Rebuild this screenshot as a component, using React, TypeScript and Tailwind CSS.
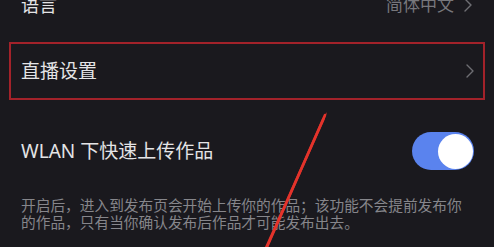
export default function App() {
  return (
    <main
      className="relative h-[247px] w-[494px] overflow-hidden bg-[#1a191e] text-[#e4e4e6]"
      style={{ fontFamily: '"Noto Sans", "Noto Sans CJK SC", sans-serif' }}
    >
      {/* 语言 row, cut at top */}
      <div className="mt-[-18px] flex h-[46px] items-center justify-between pl-[21px] pr-[22px]">
        <span className="text-[18px]">语言</span>
        <div className="flex items-center gap-[10px] text-[#77777c]">
          <span className="text-[17px]">简体中文</span>
          <Chevron />
        </div>
      </div>

      {/* 直播设置, boxed */}
      <div className="mx-[9px] mt-[14px] flex h-[58px] items-center justify-between border-2 border-[#a3222a] pl-[10px] pr-[9px]">
        <span className="text-[19px]">直播设置</span>
        <Chevron />
      </div>

      {/* WLAN toggle */}
      <div className="mt-[32px] flex items-center justify-between pl-[21px] pr-[20px]">
        <span className="text-[19px]">WLAN 下快速上传作品</span>
        <div className="flex h-[38px] w-[62px] items-center justify-end rounded-full bg-[#5a83ee] pr-[1px]">
          <div className="h-[35px] w-[35px] rounded-full bg-white" />
        </div>
      </div>

      <p className="mt-[27px] pl-[21px] text-[14.7px] leading-[16.5px] text-[#86868b]">
        开启后，进入到发布页会开始上传你的作品；该功能不会提前发布你
        <br />
        的作品，只有当你确认发布后作品才可能发布出去。
      </p>

      {/* annotation arrow */}
      <svg className="pointer-events-none absolute left-0 top-0" width="494" height="247" viewBox="0 0 494 247">
        <path d="M327 112 L324.5 120 L268 247 L265 247 L322 119 Z" fill="#e3332b" />
        <line x1="325" y1="115" x2="267" y2="247" stroke="#e3332b" strokeWidth="2.6" strokeLinecap="round" />
      </svg>
    </main>
  );
}

function Chevron() {
  return (
    <svg width="8" height="14" viewBox="0 0 8 14" fill="none">
      <path d="M1 1 L7 7 L1 13" stroke="#6e6e73" strokeWidth="1.4" strokeLinecap="round" strokeLinejoin="round" />
    </svg>
  );
}
